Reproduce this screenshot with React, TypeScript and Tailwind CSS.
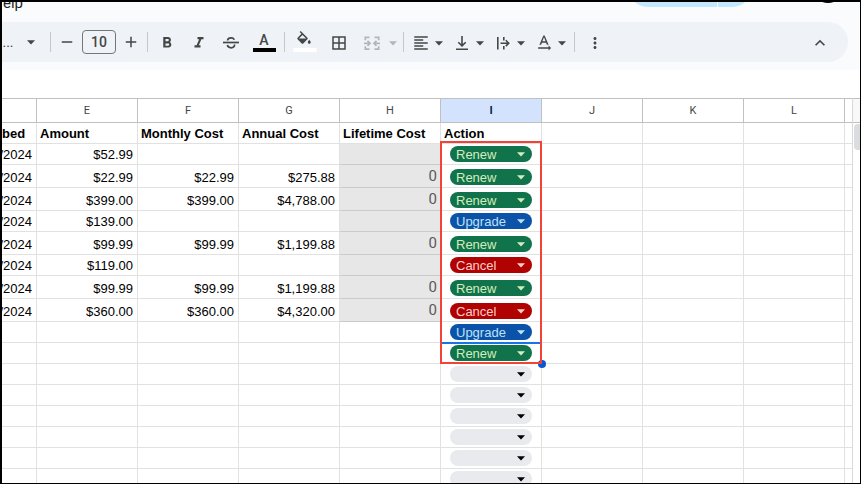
import { useState } from 'react';
import type { ReactNode } from 'react';
import {
    MdAdd,
    MdBorderAll,
    MdFormatAlignLeft,
    MdFormatBold,
    MdFormatItalic,
    MdKeyboardArrowUp,
    MdMoreVert,
    MdRemove,
    MdTextRotationNone,
} from 'react-icons/md';

type Action = '' | 'Renew' | 'Upgrade' | 'Cancel';

interface SheetRow {
    date?: string;
    amount?: string;
    monthly?: string;
    annual?: string;
    lifetime?: string;
    tracked?: boolean;
    tall?: boolean;
    action: Action;
}

const initialRows: SheetRow[] = [
    { date: '/2024', amount: '$52.99', tracked: true, action: 'Renew' },
    { date: '/2024', amount: '$22.99', monthly: '$22.99', annual: '$275.88', lifetime: '0', tracked: true, tall: true, action: 'Renew' },
    { date: '/2024', amount: '$399.00', monthly: '$399.00', annual: '$4,788.00', lifetime: '0', tracked: true, tall: true, action: 'Renew' },
    { date: '/2024', amount: '$139.00', tracked: true, action: 'Upgrade' },
    { date: '/2024', amount: '$99.99', monthly: '$99.99', annual: '$1,199.88', lifetime: '0', tracked: true, tall: true, action: 'Renew' },
    { date: '/2024', amount: '$119.00', tracked: true, action: 'Cancel' },
    { date: '/2024', amount: '$99.99', monthly: '$99.99', annual: '$1,199.88', lifetime: '0', tracked: true, tall: true, action: 'Renew' },
    { date: '/2024', amount: '$360.00', monthly: '$360.00', annual: '$4,320.00', lifetime: '0', tracked: true, tall: true, action: 'Cancel' },
    { action: 'Upgrade' },
    { action: 'Renew' },
    { action: '' },
    { action: '' },
    { action: '' },
    { action: '' },
    { action: '' },
    { action: '' },
];

const columns = ['E', 'F', 'G', 'H', 'I', 'J', 'K', 'L'];
const titles = ['Amount', 'Monthly Cost', 'Annual Cost', 'Lifetime Cost', 'Action', '', '', ''];
const SELECTED_ROW = 9;

const chipStyles: Record<Action, string> = {
    Renew: 'bg-[#11734b] text-[#d4edbc]',
    Upgrade: 'bg-[#0a53a8] text-[#bfe1f6]',
    Cancel: 'bg-[#b10202] text-[#ffcfc9]',
    '': 'bg-[#e8eaed] text-black',
};

function Caret({ className = '' }: { className?: string }) {
    return (
        <svg viewBox="0 0 10 5" className={`h-[5px] w-[10px] shrink-0 ${className}`} fill="currentColor" aria-hidden="true">
            <path d="M1 0.3h8L5 4.6z" />
        </svg>
    );
}

function Separator() {
    return <div className="h-5 w-px shrink-0 bg-[#c7c7c7]" />;
}

function ToolButton({ label, className = 'w-8', children }: { label: string; className?: string; children: ReactNode }) {
    return (
        <button type="button" aria-label={label} className={`flex h-7 shrink-0 items-center justify-center ${className}`}>
            {children}
        </button>
    );
}

function MenuToolButton({ label, children }: { label: string; children: ReactNode }) {
    return (
        <button type="button" aria-label={label} className="flex h-7 w-[41px] shrink-0 items-center gap-1 pt-0.5 pl-1">
            {children}
            <Caret />
        </button>
    );
}

function Toolbar() {
    const [fontSize, setFontSize] = useState('10');

    return (
        <div className="mr-3 flex h-10 items-center rounded-r-full bg-[#eff3f8] text-[#444746]">
            <button type="button" aria-label="Font" className="flex h-7 w-12 shrink-0 items-center gap-3">
                <span className="w-3 text-sm leading-4">...</span>
                <Caret />
            </button>
            <Separator />
            <ToolButton label="Decrease font size" className="w-[31px]">
                <MdRemove size={18} />
            </ToolButton>
            <input
                aria-label="Font size"
                value={fontSize}
                onChange={(e) => setFontSize(e.target.value)}
                className="h-6 w-[34px] shrink-0 rounded border border-[#747775] bg-transparent text-center text-sm font-medium outline-none"
            />
            <ToolButton label="Increase font size" className="w-[31px] pr-px">
                <MdAdd size={18} />
            </ToolButton>
            <Separator />

            <div className="flex px-1">
                <ToolButton label="Bold" className="w-8 pt-0.5 pr-0.5">
                    <MdFormatBold size={18} />
                </ToolButton>
                <ToolButton label="Italic" className="w-8 pt-0.5 pr-0.5">
                    <MdFormatItalic size={18} />
                </ToolButton>
                <ToolButton label="Strikethrough">
                    <svg viewBox="0 0 20 20" className="h-5 w-5" fill="none" stroke="currentColor" strokeWidth="1.7" aria-hidden="true">
                        <path d="M1 10.5h16" />
                        <path d="M5.6 8.6C5.6 6.7 7 5.8 9 5.8c1.700 0 2.800 .6 3.300 1.900" />
                        <path d="M5.300 13.100c.5 1.800 1.900 2.700 3.800 2.700 2.100 0 3.500-1.100 3.500-3.200" />
                    </svg>
                </ToolButton>
                <ToolButton label="Text color">
                    <span className="flex flex-col items-center">
                        <span className="text-sm leading-4 font-medium">A</span>
                        <span className="h-1 w-[23px] bg-black" />
                    </span>
                </ToolButton>
            </div>
            <Separator />

            <div className="flex px-1">
                <ToolButton label="Fill color">
                    <svg viewBox="0 0 24 24" className="h-6 w-6" fill="currentColor" aria-hidden="true">
                        <g transform="translate(2 1) scale(0.75)">
                            <path d="M16.56 8.94 7.62 0 6.21 1.41l2.38 2.38-5.15 5.15c-.59.59-.59 1.54 0 2.12l5.500 5.500c.29.29.68.44 1.060.44s.77-.15 1.060-.44l5.500-5.500c.59-.58.59-1.530 0-2.120zM5.210 10 10 5.210 14.790 10H5.210zM19 11.500s-2 2.170-2 3.500c0 1.100.9 2 2 2s2-.9 2-2c0-1.330-2-3.500-2-3.500z" />
                        </g>
                        <path fill="#fff" d="M0.500 18h23v4h-23z" />
                    </svg>
                </ToolButton>
                <ToolButton label="Borders" className="w-9 pt-0.5">
                    <MdBorderAll size={18} />
                </ToolButton>
                <button type="button" aria-label="Merge cells" className="flex h-7 w-[42px] items-center gap-[7px] pt-0.5 pl-1.5 text-[#b3b6b9]">
                    <svg viewBox="0 0 18 18" className="h-[18px] w-[18px]" fill="none" stroke="currentColor" strokeWidth="1.700" aria-hidden="true">
                        <path d="M6.500 3.300H2.300v3M11.500 3.300h4.200v3M6.500 15.200H2.300v-3M11.500 15.200h4.200v-3" />
                        <path d="M1 9.300h5.500M17 9.300h-5.500M4.500 6.800 7 9.300l-2.500 2.500M13.500 6.800 11 9.300l2.500 2.500" />
                    </svg>
                    <Caret />
                </button>
            </div>
            <Separator />

            <div className="flex pr-0.5 pl-1">
                <MenuToolButton label="Horizontal align">
                    <MdFormatAlignLeft size={18} />
                </MenuToolButton>
                <MenuToolButton label="Vertical align">
                    <svg viewBox="0 0 18 18" className="h-[18px] w-[18px]" fill="none" stroke="currentColor" strokeWidth="1.600" aria-hidden="true">
                        <path d="M3 15.300h12M9 2v9.500M5.300 8.200 9 11.900l3.700-3.700" />
                    </svg>
                </MenuToolButton>
                <MenuToolButton label="Text wrapping">
                    <svg viewBox="0 0 18 18" className="h-[18px] w-[18px]" fill="none" stroke="currentColor" strokeWidth="1.600" aria-hidden="true">
                        <path d="M3.800 3v12.500M9.800 3v3.500M9.800 12v3.500M6.500 9.200h8M11.800 6.300l2.900 2.900-2.900 2.900" />
                    </svg>
                </MenuToolButton>
                <MenuToolButton label="Text rotation">
                    <MdTextRotationNone size={20} className="-mx-px" />
                </MenuToolButton>
            </div>
            <Separator />

            <div className="flex flex-1 justify-between pr-3 pl-1">
                <ToolButton label="More" className="w-8 pt-0.5">
                    <MdMoreVert size={18} />
                </ToolButton>
                <ToolButton label="Hide the menus" className="w-8 pt-0.5">
                    <MdKeyboardArrowUp size={20} />
                </ToolButton>
            </div>
        </div>
    );
}

function ActionChip({ value, row, onChange }: { value: Action; row: number; onChange: (value: Action) => void }) {
    return (
        <div className={`relative mx-[9px] mb-0.5 h-4 rounded-full ${chipStyles[value]}`}>
            <select
                aria-label={`Action for row ${row}`}
                value={value}
                onChange={(e) => onChange(e.target.value as Action)}
                className="block h-4 w-full appearance-none rounded-full bg-transparent pt-px pl-1.5 text-[13px] leading-[15px] outline-none"
            >
                <option value="" />
                <option value="Renew">Renew</option>
                <option value="Upgrade">Upgrade</option>
                <option value="Cancel">Cancel</option>
            </select>
            <Caret className="pointer-events-none absolute top-1.5 right-1.5" />
        </div>
    );
}

function Sheet() {
    const [rows, setRows] = useState(initialRows);

    const setAction = (index: number, action: Action) => {
        setRows(rows.map((row, i) => (i === index ? { ...row, action } : row)));
    };

    const cell = 'border-r border-b border-[#e1e1e1] p-0 align-bottom';
    const textCell = `${cell} pr-1 pb-0.5 text-right`;

    return (
        <table className="w-full table-fixed border-separate border-spacing-0 text-[13px] leading-[15px] text-black">
            <colgroup>
                <col className="w-[35px]" />
                {columns.map((name) => (
                    <col key={name} />
                ))}
                <col className="w-[7px]" />
            </colgroup>
            <thead>
                <tr className="h-[25px] font-['Roboto',sans-serif] text-[11px] text-[#444746]">
                    <th className="border-y border-r border-[#c0c0c0] p-0" />
                    {columns.map((name) => (
                        <th
                            key={name}
                            scope="col"
                            className={`border-y border-r border-[#c0c0c0] p-0 ${name === 'I' ? 'bg-[#d3e3fd] font-bold text-[#041e49]' : 'font-normal'}`}
                        >
                            {name}
                        </th>
                    ))}
                    <th className="border-y border-[#c0c0c0] p-0" />
                </tr>
            </thead>
            <tbody>
                <tr className="h-[21px] font-bold">
                    <td className={`${cell} pb-0.5`}>bed</td>
                    {titles.map((title, i) => (
                        <td key={i} className={`${cell} pb-0.5 pl-[3px] whitespace-nowrap`}>
                            {title}
                        </td>
                    ))}
                    <td className="border-b border-[#e1e1e1] p-0" />
                </tr>
                {rows.map((row, i) => (
                    <tr key={i} className={row.tall ? 'h-[23px]' : 'h-[21px]'}>
                        <td className={textCell}>
                            <div className="flex justify-end">{row.date}</div>
                        </td>
                        <td className={textCell}>{row.amount}</td>
                        <td className={textCell}>{row.monthly}</td>
                        <td className={textCell}>{row.annual}</td>
                        <td
                            className={`border-r border-b p-0 pr-[3px] pb-[3px] text-right align-bottom font-['Roboto',sans-serif] text-[15px] text-[#5a5a5a] ${
                                row.tracked ? 'border-[#cbcbcb] bg-[#e7e7e7]' : 'border-[#e1e1e1]'
                            }`}
                        >
                            {row.lifetime}
                        </td>
                        <td className={`${cell} relative`}>
                            <ActionChip value={row.action} row={i + 2} onChange={(action) => setAction(i, action)} />
                            {i === SELECTED_ROW && (
                                <>
                                    {/* Active cell, its fill handle and the outline round the whole list */}
                                    <div className="pointer-events-none absolute -top-px right-0 left-0 h-0.5 bg-[#1a73e8]" />
                                    <div className="pointer-events-none absolute -right-[5px] -bottom-[5px] z-10 h-2 w-2 rounded-full bg-[#0b57d0]" />
                                    <div className="pointer-events-none absolute -right-px -bottom-px -left-px z-20 h-[223px] border-2 border-[#f44336]" />
                                </>
                            )}
                        </td>
                        <td className={cell} />
                        <td className={cell} />
                        <td className={cell} />
                        <td className="border-b border-[#e1e1e1] p-0" />
                    </tr>
                ))}
            </tbody>
        </table>
    );
}

export default function App() {
    return (
        <div className="flex h-screen flex-col overflow-hidden border-t-2 border-r border-b border-l-2 border-black bg-white font-['Liberation_Sans',Arial,sans-serif]">
            <header className="shrink-0 bg-[#f9fbfd] pb-2 font-['Roboto',sans-serif]">
                <div className="flex h-5 items-start overflow-hidden pr-4">
                    <button type="button" className="-mt-[7px] h-4 pl-px text-[15px] leading-4 text-[#1f1f1f]">
                        elp
                    </button>
                    <div className="-mt-8 ml-auto flex gap-px">
                        <button type="button" aria-label="Share" className="h-[37px] w-[88px] rounded-l-full bg-[#c2e7ff]" />
                        <button type="button" aria-label="Share options" className="h-[37px] w-[33px] rounded-r-full bg-[#c2e7ff]" />
                    </div>
                    <button type="button" aria-label="Account" className="-mt-[31px] ml-[61px] h-8 w-8 rounded-full bg-black" />
                </div>
                <Toolbar />
            </header>

            <main className="mt-7 flex min-h-0 flex-1 overflow-hidden">
                <div className="min-w-0 flex-1">
                    <Sheet />
                </div>
                <div className="w-2 shrink-0 border-l border-[#d9d9d9]">
                    <div className="h-[25px] border-y border-[#c0c0c0] bg-[#f8f8f8]" />
                    <div className="mt-px ml-px h-[26px] rounded-l bg-[#dadce0]" />
                </div>
            </main>
        </div>
    );
}
